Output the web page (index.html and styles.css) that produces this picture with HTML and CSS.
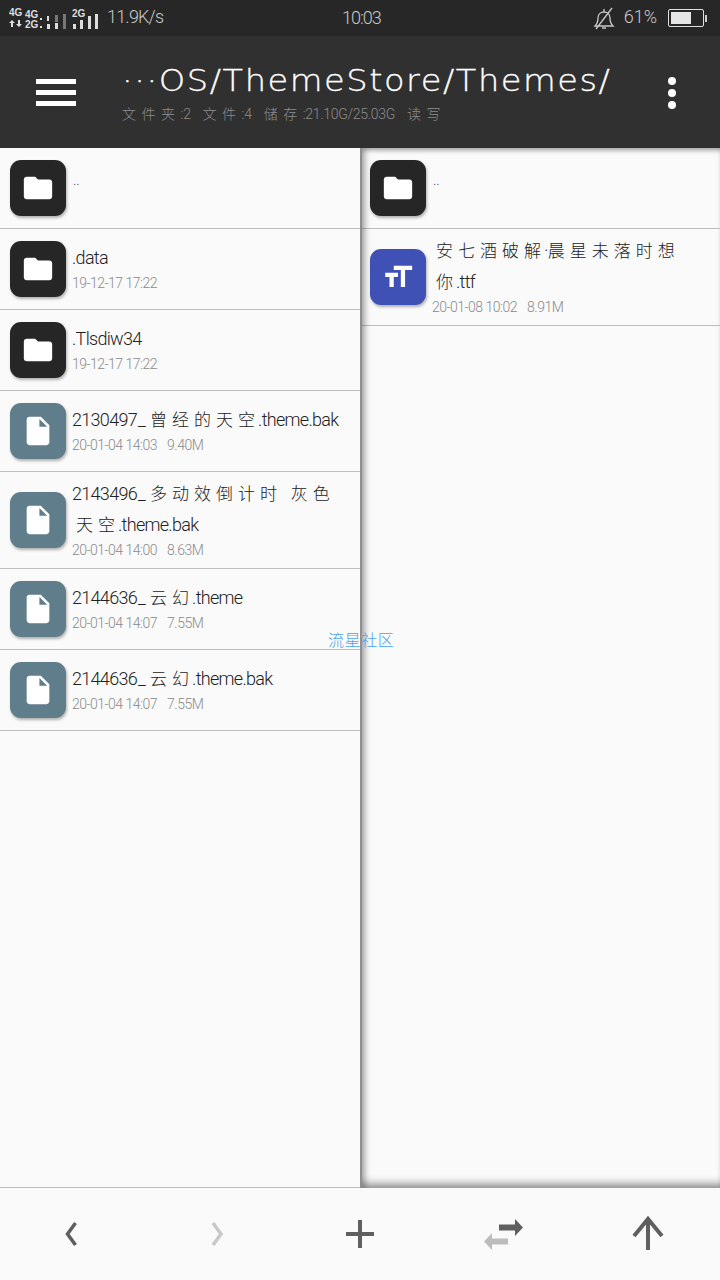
FILE: index.html
```html
<!DOCTYPE html>
<html>
<head>
    <meta charset="utf-8">
    <link rel="stylesheet" href="styles.css">
</head>
<body>
    <svg class="sprites" width="0" height="0">
        <symbol id="folder" viewBox="0 0 24 24"><path d="M10 4H4c-1.1 0-2 .9-2 2v12c0 1.100.9 2 2 2h16c1.100 0 2-.9 2-2V8c0-1.100-.9-2-2-2h-8l-2-2z"/></symbol>
        <symbol id="file" viewBox="0 0 24 24"><path d="M6 2c-1.100 0-2 .9-2 2v16c0 1.100.9 2 2 2h12c1.100 0 2-.9 2-2V8l-6-6H6zm7 7V3.500L18.500 9H13z"/></symbol>
        <symbol id="font" viewBox="0 0 24 24"><path d="M9 4v3h5v12h3V7h5V4H9zm-6 8h3v7h3v-7h3V9H3v3z"/></symbol>
    </svg>

    <div class="app">
        <div class="status-bar">
            <svg class="signal" width="92" height="24" viewBox="0 0 92 24">
                <text x="0" y="10">4G</text>
                <path class="arrows" d="M3 14l3 3H4v4H2v-4H0zM10 21l-3-3h2v-4h2v4h2z"/>
                <text x="16" y="12">4G</text>
                <text x="16" y="22">2G</text>
                <rect x="31" y="12" width="2" height="2"/><rect x="38" y="10" width="2" height="5"/><rect x="46" y="9" width="3" height="7" class="dim"/><rect x="54" y="8" width="3" height="8" class="dim"/>
                <rect x="31" y="20" width="2" height="2"/><rect x="38" y="18" width="3" height="5"/><rect x="46" y="17" width="3" height="6"/><rect x="54" y="16" width="3" height="7" class="dim"/>
                <text x="63" y="11">2G</text>
                <rect x="64" y="18" width="3" height="5"/><rect x="71" y="14" width="3" height="9"/><rect x="79" y="10" width="3" height="13"/><rect x="86" y="8" width="3" height="15"/>
            </svg>
            <span class="speed">11.9K/s</span>
            <span class="clock">10:03</span>
            <div class="status-right">
                <svg class="bell" width="22" height="24" viewBox="0 0 22 24">
                    <path d="M2 20c2-2 3-4 3-8 0-4 3-6 6-6s6 2 6 6c0 4 1 6 3 8zM9 22h4M11 3v3M3 23L19 2"/>
                </svg>
                <span class="percent">61%</span>
                <div class="battery"><div class="battery-level"></div></div>
                <div class="battery-tip"></div>
            </div>
        </div>

        <header class="toolbar">
            <div class="menu-btn"><span></span><span></span><span></span></div>
            <div class="path-box">
                <div class="path">···OS/ThemeStore/Themes/</div>
                <div class="path-info">
                    <span><span class="cjk">文件夹</span>:2</span>
                    <span><span class="cjk">文件</span>:4</span>
                    <span><span class="cjk">储存</span>:21.10G/25.03G</span>
                    <span><span class="cjk">读写</span></span>
                </div>
            </div>
            <div class="more-btn"><i></i><i></i><i></i></div>
        </header>

        <main class="panes">
            <section class="pane pane-left">
                <div class="row">
                    <div class="icon icon-dir"><svg><use href="#folder"/></svg></div>
                    <div class="info"><div class="up">..</div></div>
                </div>
                <div class="row">
                    <div class="icon icon-dir"><svg><use href="#folder"/></svg></div>
                    <div class="info"><div class="name">.data</div><div class="meta"><span>19-12-17 17:22</span></div></div>
                </div>
                <div class="row">
                    <div class="icon icon-dir"><svg><use href="#folder"/></svg></div>
                    <div class="info"><div class="name">.Tlsdiw34</div><div class="meta"><span>19-12-17 17:22</span></div></div>
                </div>
                <div class="row">
                    <div class="icon icon-file"><svg><use href="#file"/></svg></div>
                    <div class="info"><div class="name">2130497<span class="us">_</span><span class="cjk">曾经的天空</span>.theme.bak</div><div class="meta"><span>20-01-04 14:03</span><span>9.40M</span></div></div>
                </div>
                <div class="row row-tall">
                    <div class="icon icon-file"><svg><use href="#file"/></svg></div>
                    <div class="info"><div class="name">2143496<span class="us">_</span><span class="cjk">多动效倒计时 灰色</span><br><span class="cjk indent">天空</span>.theme.bak</div><div class="meta"><span>20-01-04 14:00</span><span>8.63M</span></div></div>
                </div>
                <div class="row">
                    <div class="icon icon-file"><svg><use href="#file"/></svg></div>
                    <div class="info"><div class="name">2144636<span class="us">_</span><span class="cjk">云幻</span>.theme</div><div class="meta"><span>20-01-04 14:07</span><span>7.55M</span></div></div>
                </div>
                <div class="row">
                    <div class="icon icon-file"><svg><use href="#file"/></svg></div>
                    <div class="info"><div class="name">2144636<span class="us">_</span><span class="cjk">云幻</span>.theme.bak</div><div class="meta"><span>20-01-04 14:07</span><span>7.55M</span></div></div>
                </div>
            </section>
            <section class="pane pane-right">
                <div class="row">
                    <div class="icon icon-dir"><svg><use href="#folder"/></svg></div>
                    <div class="info"><div class="up">..</div></div>
                </div>
                <div class="row row-tall">
                    <div class="icon icon-font"><svg><use href="#font"/></svg></div>
                    <div class="info"><div class="name"><span class="cjk indent">安七酒破解</span>·<span class="cjk">晨星未落时想</span><br><span class="cjk indent">你</span>.ttf</div><div class="meta"><span>20-01-08 10:02</span><span>8.91M</span></div></div>
                </div>
            </section>
            <div class="watermark">流星社区</div>
        </main>

        <footer class="bottom-bar">
            <div class="bottom-btn"><svg width="36" height="36" viewBox="0 0 36 36"><path class="line thin" d="M21.500 7L13.500 18l8 11"/></svg></div>
            <div class="bottom-btn"><svg width="36" height="36" viewBox="0 0 36 36"><path class="line thin off" d="M15 7l8 11-8 11"/></svg></div>
            <div class="bottom-btn"><svg width="36" height="36" viewBox="0 0 36 36"><path class="line" d="M18 4v28M4 18h28"/></svg></div>
            <div class="bottom-btn"><svg width="36" height="36" viewBox="0 0 36 36"><path class="solid" d="M13 8.500h16V3l8 8.500-8 8.500v-5.500H13z"/><path class="solid off" d="M22 22.500H6V17l-8 8.500 8 8.500v-5.500h16z"/></svg></div>
            <div class="bottom-btn"><svg width="36" height="36" viewBox="0 0 36 36"><path class="line" d="M18 34V3M4 20L18 3l14 17"/></svg></div>
        </footer>
    </div>
</body>
</html>
```

FILE: styles.css
```css
* {
    box-sizing: border-box;
}

html, body {
    margin: 0;
    padding: 0;
}

body {
    font-family: "Roboto", "Noto Sans CJK SC", sans-serif;
    font-weight: 300;
}

.sprites {
    display: block;
    height: 0;
}

.app {
    display: flex;
    flex-direction: column;
    width: 720px;
    height: 1280px;
    overflow: hidden;
    background-color: #fafafa;
}

/* status bar */
.status-bar {
    display: flex;
    align-items: center;
    height: 36px;
    padding: 0 13px 0 9px;
    background-color: #272727;
    color: #c8c8c8;
    position: relative;
}

.signal text {
    font-family: "Liberation Sans", sans-serif;
    font-size: 10px;
    font-weight: 700;
    fill: #ddd;
}

.signal rect, .signal .arrows {
    fill: #ddd;
}

.signal .dim {
    fill: #777;
}

.speed {
    margin: -3px 0 0 6px;
    font-size: 18px;
    letter-spacing: -0.8px;
}

.clock {
    position: absolute;
    left: 342px;
    top: 7px;
    font-size: 18px;
    letter-spacing: -1px;
}

.status-right {
    display: flex;
    align-items: center;
    margin-left: auto;
}

.bell {
    margin-top: -1px;
    fill: none;
    stroke: #c8c8c8;
    stroke-width: 1.300;
    overflow: visible;
}

.percent {
    margin: -3px 0 0 9px;
    font-size: 18px;
}

.battery {
    width: 36px;
    height: 18px;
    margin-left: 11px;
    padding: 2px;
    border: 1px solid #e0e0e0;
    border-radius: 2px;
}

.battery-level {
    width: 20px;
    height: 100%;
    background-color: #e6e6e6;
}

.battery-tip {
    width: 2px;
    height: 7px;
    margin-left: 1px;
    background-color: #ccc;
}

/* toolbar */
.toolbar {
    display: flex;
    align-items: center;
    height: 112px;
    flex-shrink: 0;
    background-color: #303030;
    position: relative;
    z-index: 3;
}

.menu-btn {
    display: flex;
    flex-direction: column;
    gap: 6px;
    width: 40px;
    margin-left: 36px;
    margin-top: 1px;
}

.menu-btn span {
    height: 5px;
    background-color: #fff;
}

.path-box {
    width: 500px;
    margin-left: 46px;
}

.path {
    font-family: "DejaVu Sans", sans-serif;
    font-weight: 200;
    font-size: 30px;
    line-height: 40px;
    letter-spacing: 1.400px;
    color: #fff;
    white-space: nowrap;
    transform: scaleX(1.120);
    transform-origin: left center;
    -webkit-text-stroke: 0.3px #fff;
}

.path-info {
    display: flex;
    gap: 12px;
    margin-top: 3px;
    font-size: 14px;
    line-height: 20px;
    color: #8c8c8c;
    white-space: nowrap;
    letter-spacing: -0.3px;
}

.path-info .cjk {
    letter-spacing: 5.500px;
    font-size: 14px;
}

.more-btn {
    display: flex;
    flex-direction: column;
    gap: 4px;
    margin-left: 46px;
    margin-top: 1px;
}

.more-btn i {
    display: block;
    width: 8px;
    height: 8px;
    border-radius: 50%;
    background-color: #fff;
}

/* file panes */
.panes {
    display: flex;
    flex: 1;
    position: relative;
}

.pane {
    width: 360px;
}

.pane-left {
    border-bottom: 1px solid #bdbdbd;
    box-shadow: 2px 0 0 #8f8f8f, 5px 0 6px rgba(0, 0, 0, 0.35);
    position: relative;
    z-index: 1;
}

.pane-right {
    box-shadow: inset 0 5px 5px -3px rgba(0, 0, 0, 0.4), inset 0 -10px 8px -6px rgba(0, 0, 0, 0.45);
}

.row {
    display: flex;
    align-items: center;
    height: 81px;
    padding: 0 0 1px 10px;
    border-bottom: 1px solid #bdbdbd;
}

.row-tall {
    height: 97px;
}

.icon {
    display: flex;
    align-items: center;
    justify-content: center;
    width: 56px;
    height: 56px;
    flex-shrink: 0;
    border-radius: 11px;
    box-shadow: 1px 2px 3px rgba(0, 0, 0, 0.3);
}

.icon svg {
    width: 34px;
    height: 34px;
    fill: #fff;
}

.icon-dir {
    background-color: #262626;
}

.icon-file {
    background-color: #607d8b;
}

.icon-font {
    background-color: #3f51b5;
}

.info {
    margin: -2px 0 0 6px;
    min-width: 0;
}

.up {
    margin: -14px 0 0 1px;
    font-size: 14px;
    color: #444;
}

.name {
    font-size: 18px;
    line-height: 31px;
    letter-spacing: -0.7px;
    color: #222;
    white-space: nowrap;
}

.cjk {
    font-family: "Noto Sans CJK SC", sans-serif;
    font-size: 17px;
    line-height: 1;
    letter-spacing: 5px;
    font-weight: 300;
}

.name .cjk {
    margin-right: -2px;
}

.us {
    margin: 0 5px 0 1px;
}

.indent {
    margin-left: 4px;
}

.meta {
    display: flex;
    gap: 10px;
    font-size: 14px;
    line-height: 20px;
    letter-spacing: -0.5px;
    color: #8a8a8a;
}

.watermark {
    position: absolute;
    left: 328px;
    top: 479px;
    z-index: 2;
    font-family: "Noto Sans CJK SC", sans-serif;
    font-size: 16px;
    line-height: 24px;
    letter-spacing: 0.6px;
    color: #4ba3ee;
}

/* bottom buttons */
.bottom-bar {
    display: flex;
    height: 92px;
    flex-shrink: 0;
    background-color: #fafafa;
    position: relative;
    z-index: 3;
}

.bottom-btn {
    display: flex;
    flex: 1;
    align-items: center;
    justify-content: center;
}

.bottom-btn svg {
    overflow: visible;
}

.line {
    fill: none;
    stroke: #5f5f5f;
    stroke-width: 4;
}

.line.thin {
    stroke-width: 3.500;
}

.line.off {
    stroke: #c8c8c8;
}

.solid {
    fill: #5f5f5f;
}

.solid.off {
    fill: #bcbcbc;
}
```
